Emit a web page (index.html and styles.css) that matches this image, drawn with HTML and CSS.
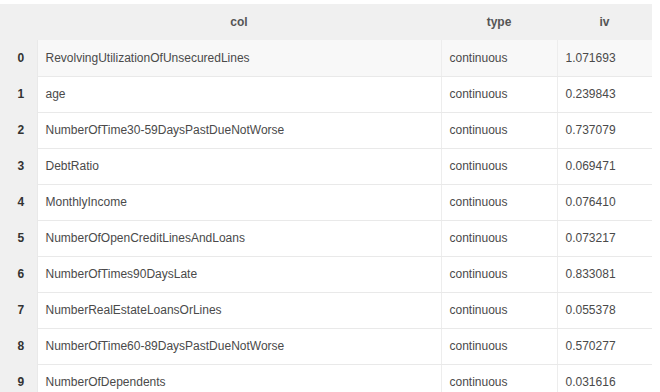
FILE: index.html
```html
<!DOCTYPE html>
<html lang="en">
<head>
    <meta charset="UTF-8">
    <title>IV table</title>
    <link rel="stylesheet" href="styles.css">
</head>
<body>
    <table class="frame">
        <thead>
            <tr>
                <th class="idx"></th>
                <th class="col-name">col</th>
                <th class="col-type">type</th>
                <th class="col-iv">iv</th>
            </tr>
        </thead>
        <tbody>
            <tr class="hover"><th class="idx">0</th><td>RevolvingUtilizationOfUnsecuredLines</td><td>continuous</td><td>1.071693</td></tr>
            <tr><th class="idx">1</th><td>age</td><td>continuous</td><td>0.239843</td></tr>
            <tr><th class="idx">2</th><td>NumberOfTime30-59DaysPastDueNotWorse</td><td>continuous</td><td>0.737079</td></tr>
            <tr><th class="idx">3</th><td>DebtRatio</td><td>continuous</td><td>0.069471</td></tr>
            <tr><th class="idx">4</th><td>MonthlyIncome</td><td>continuous</td><td>0.076410</td></tr>
            <tr><th class="idx">5</th><td>NumberOfOpenCreditLinesAndLoans</td><td>continuous</td><td>0.073217</td></tr>
            <tr><th class="idx">6</th><td>NumberOfTimes90DaysLate</td><td>continuous</td><td>0.833081</td></tr>
            <tr><th class="idx">7</th><td>NumberRealEstateLoansOrLines</td><td>continuous</td><td>0.055378</td></tr>
            <tr><th class="idx">8</th><td>NumberOfTime60-89DaysPastDueNotWorse</td><td>continuous</td><td>0.570277</td></tr>
            <tr><th class="idx">9</th><td>NumberOfDependents</td><td>continuous</td><td>0.031616</td></tr>
        </tbody>
    </table>
</body>
</html>
```

FILE: styles.css
```css
* {
    margin: 0;
    padding: 0;
    box-sizing: border-box;
}

body {
    font-family: 'Liberation Sans', Arial, sans-serif;
    background: #ffffff;
    padding: 4px 8px 0 0;
}

.frame {
    border-collapse: collapse;
    width: 652px;
    table-layout: fixed;
    font-size: 12px;
    color: #4a4a4a;
}

.frame th,
.frame td {
    height: 36px;
    vertical-align: middle;
}

.frame thead th {
    background: #f0f0f0;
    font-weight: bold;
    color: #555;
    text-align: center;
}

.frame .idx {
    width: 37px;
    padding-left: 5px;
    background: #f0f0f0;
    font-weight: bold;
    color: #333;
    text-align: center;
}

.frame .col-type {
    width: 116px;
}

.frame .col-iv {
    width: 95px;
}

.frame tbody td {
    padding: 0 8px;
    border: 1px solid #e9e9e9;
    border-right: 1px solid #ededed;
    text-align: left;
}

.frame tbody tr:first-child td {
    border-top: none;
}

.frame tbody td:last-child {
    border-right: none;
}

.frame tbody tr.hover td {
    background: #f8f8f8;
}
```
